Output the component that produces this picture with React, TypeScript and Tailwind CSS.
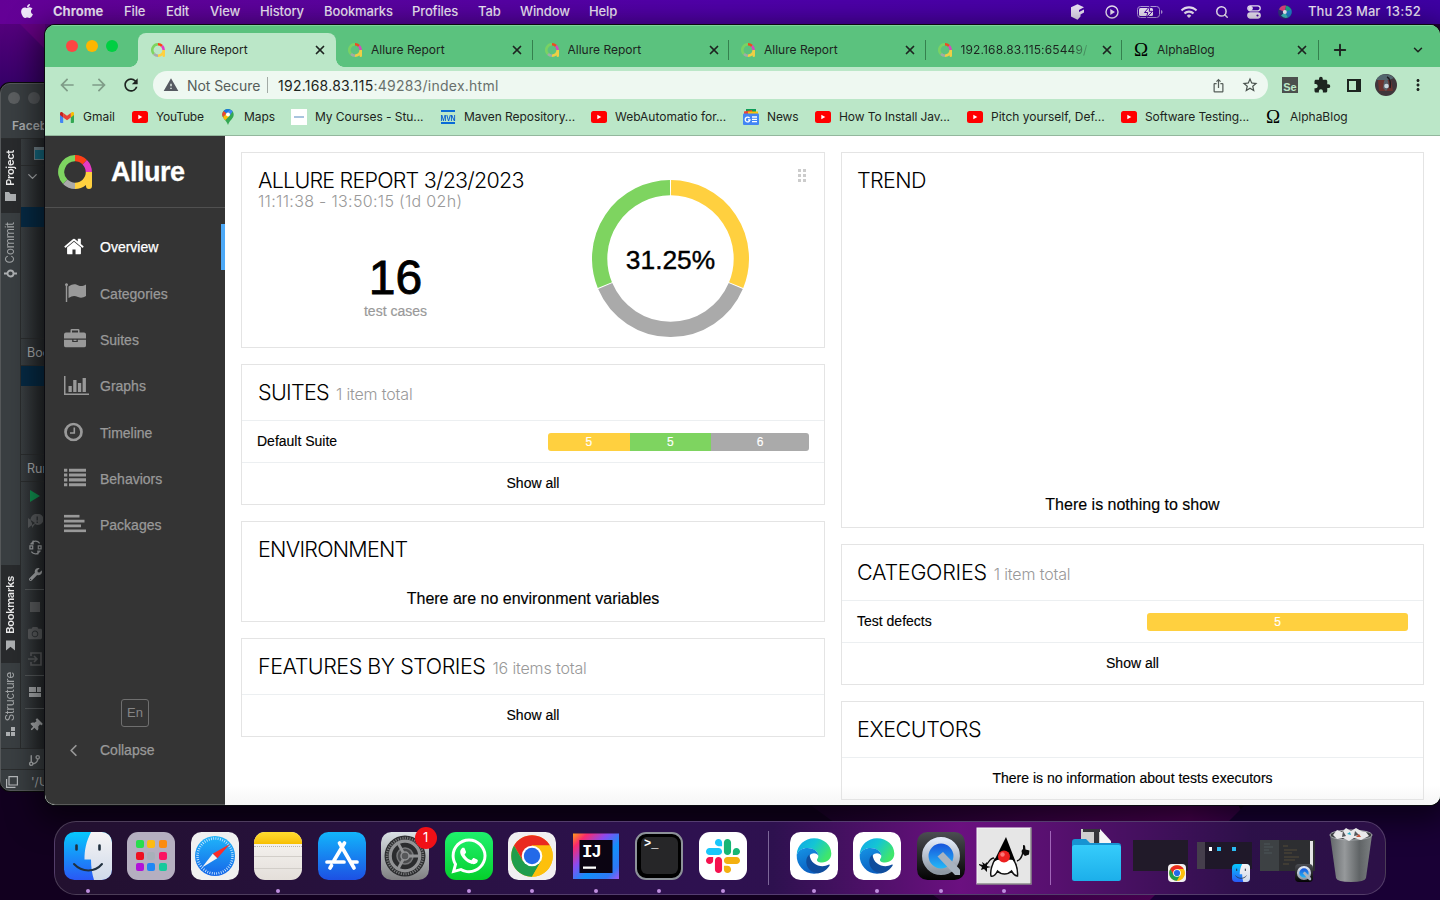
import type { ReactNode } from "react";
import { FaApple, FaWhatsapp, FaWrench, FaCamera, FaThumbtack } from "react-icons/fa";
import {
  MdArrowBack,
  MdArrowForward,
  MdRefresh,
  MdWarning,
  MdIosShare,
  MdStarBorder,
  MdExtension,
  MdMoreVert,
  MdWifi,
} from "react-icons/md";
import { ChevronDown, ChevronLeft, Search, GitBranch, X, Plus } from "lucide-react";

function Arc({ cx, cy, r, w, from, to, color }: { cx: number; cy: number; r: number; w: number; from: number; to: number; color: string }) {
  const p = (a: number) => {
    const t = ((a - 90) * Math.PI) / 180;
    return `${(cx + r * Math.cos(t)).toFixed(3)} ${(cy + r * Math.sin(t)).toFixed(3)}`;
  };
  return <path d={`M${p(from)}A${r} ${r} 0 ${to - from > 180 ? 1 : 0} 1 ${p(to)}`} stroke={color} strokeWidth={w} fill="none" />;
}

function AllureMark({ className }: { className: string }) {
  return (
    <svg viewBox="0 0 34 34" className={className}>
      <Arc cx={17} cy={17} r={13.8} w={6.2} from={225} to={360} color="#7ed460" />
      <Arc cx={17} cy={17} r={13.8} w={6.2} from={0} to={45} color="#fd3f17" />
      <Arc cx={17} cy={17} r={13.8} w={6.2} from={45} to={90} color="#e63bc3" />
      <Arc cx={17} cy={17} r={13.8} w={6.2} from={180} to={225} color="#aaaaaa" />
      <path d="M17 34V27.800C23 27.800 27.800 23 27.800 17H34V31A3 3 0 0 1 28 31V30C25 32.800 21 34 17 34Z" fill="#ffd03f" />
    </svg>
  );
}

/* ---------- menu bar ---------- */

function MenuBar() {
  const items: [string, string][] = [
    ["File", "w-[42px]"],
    ["Edit", "w-[44px]"],
    ["View", "w-[50px]"],
    ["History", "w-[64px]"],
    ["Bookmarks", "w-[88px]"],
    ["Profiles", "w-[66px]"],
    ["Tab", "w-[42px]"],
    ["Window", "w-[69px]"],
    ["Help", "w-[40px]"],
  ];
  return (
    <header className="flex h-6 shrink-0 items-center bg-gradient-to-r from-[#640096] via-[#5000aa] to-[#3e00a4] pl-[19px] pr-[18px] font-['Inter'] text-[13px] font-medium tracking-[-0.12px] text-[#f1e8fb]">
      <FaApple className="mr-[18px] size-[16px] -translate-y-px" />
      <span className="w-[71px] font-bold tracking-[0px]">Chrome</span>
      {items.map(([t, w]) => (
        <span key={t} className={`${w} whitespace-nowrap`}>
          {t}
        </span>
      ))}
      <span className="grow" />
      <svg viewBox="0 0 16 16" className="mr-[19px] size-[16px] text-[#eee6fa]" fill="currentColor">
        <path d="M7.500 .3 14 3.300 9 6v2l5-2.500v3L10.500 10.500v2L7.500 15.700 1 12.500V3.300z" />
      </svg>
      <svg viewBox="0 0 14 14" className="mr-[18px] size-[14px]" fill="none" stroke="currentColor" strokeWidth="1.400">
        <circle cx="7" cy="7" r="6" />
        <path d="M5.300 4 10 7 5.300 10z" fill="currentColor" stroke="none" />
      </svg>
      <svg viewBox="0 0 26 12" className="mr-[17px] h-[12px] w-[26px]" fill="none">
        <rect x=".5" y=".5" width="22" height="11" rx="3" stroke="#b49be0" />
        <rect x="2" y="2" width="14" height="8" rx="1.500" fill="#f1e8fb" />
        <path d="M24 4v4c2-.8 2-3.200 0-4" fill="#b49be0" />
        <path d="M13 .2 7.500 6.500h3.200L9.500 11.800 15.500 5.300h-3.300z" fill="#f1e8fb" stroke="#4a00a6" strokeWidth="1" />
      </svg>
      <MdWifi className="mr-[17px] size-[18px]" />
      <Search className="mr-[18px] size-[14px]" strokeWidth={2.6} />
      <svg viewBox="0 0 14 14" className="mr-[17px] size-[14px]" fill="none" stroke="currentColor" strokeWidth="1.300">
        <rect x=".8" y=".8" width="12.400" height="5" rx="2.500" />
        <circle cx="3.500" cy="3.300" r="1.700" fill="currentColor" />
        <rect x=".8" y="8" width="12.400" height="5" rx="2.500" fill="currentColor" />
        <circle cx="10.500" cy="10.500" r="1.100" fill="#4a00a6" stroke="none" />
      </svg>
      <svg viewBox="0 0 14 14" className="mr-[16px] size-[14px]">
        <circle cx="7" cy="7" r="7" fill="#31307e" />
        <path d="M1 4.500A6.500 6.500 0 0 1 8 .6L7 7z" fill="#e0407f" />
        <path d="M7 7 12.800 3.500A6.500 6.500 0 0 1 10 12.700z" fill="#1f7fd1" />
        <path d="M7 7 8 .8a6.500 6.500 0 0 1 5 4z" fill="#19a78c" />
        <path d="M3 10.500 7 7l3 5.500a6.500 6.500 0 0 1-7-2z" fill="#3fc3c3" />
        <circle cx="6.800" cy="7" r="2" fill="#f3f4ff" />
      </svg>
      <span className="w-[78px] whitespace-nowrap tracking-[0.1px]">Thu 23 Mar</span>
      <span className="w-[36px] whitespace-nowrap text-[13px] tracking-[0.3px]">13:52</span>
    </header>
  );
}

/* ---------- editor window behind the browser ---------- */

function StripeLabel({ children, active, h, icon }: { children: string; active?: boolean; h: string; icon: ReactNode }) {
  return (
    <div className={`${h} flex w-5 flex-col items-center justify-end pb-[12px] pr-[2px] ${active ? "bg-[#292b2d] font-semibold text-[#eeeeee]" : "text-[#a3a6a8]"}`}>
      <span
        className={`rotate-180 whitespace-nowrap leading-5 [writing-mode:vertical-rl] ${active ? "text-[11px] tracking-[-0.250px]" : "text-[11.500px] tracking-[-0.100px]"}`}
      >
        {children}
      </span>
      <span className="mt-[6px] text-[#aeb1b3]">{icon}</span>
    </div>
  );
}

function EditorWindow() {
  return (
    <section className="absolute left-0 top-[83px] flex h-[708px] w-[200px] flex-col overflow-hidden rounded-[10px] border border-[#55585a] bg-[#3a3f42] font-['Inter'] text-[#a9acae] shadow-[0_0_0_1px_#0a0a0a]">
      <div className="flex h-[27px] shrink-0 items-center gap-2 pl-[7px]">
        <i className="size-3 rounded-full bg-[#5c5f61]" />
        <i className="size-3 rounded-full bg-[#54575a]" />
      </div>
      <div className="h-[28px] shrink-0 border-b border-[#2b2d2e] pl-[11px] text-[12px] font-semibold leading-[29px]">Facebook</div>
      <div className="flex min-h-0 grow">
        <div className="flex w-5 shrink-0 flex-col border-r border-[#2b2d2e]">
          <StripeLabel
            active
            h="h-[74px]"
            icon={
              <svg viewBox="0 0 11 9" className="h-[9px] w-[11px]" fill="currentColor">
                <path d="M0 0h4l1.500 2H11v7H0z" />
              </svg>
            }
          >
            Project
          </StripeLabel>
          <StripeLabel
            h="h-[77px]"
            icon={
              <svg viewBox="0 0 13 9" className="h-[9px] w-[13px]" fill="none" stroke="currentColor" strokeWidth="1.800">
                <circle cx="6.500" cy="4.500" r="3" />
                <path d="M0 4.500h3.500M9.500 4.500H13" />
              </svg>
            }
          >
            Commit
          </StripeLabel>
          <div className="grow" />
          <StripeLabel
            active
            h="h-[98px]"
            icon={
              <svg viewBox="0 0 10 11" className="h-[11px] w-[9px]" fill="currentColor">
                <path d="M0 0h10v11L5 7l-5 4z" />
              </svg>
            }
          >
            Bookmarks
          </StripeLabel>
          <StripeLabel
            h="h-[85px]"
            icon={
              <svg viewBox="0 0 9 9" className="size-[9px]" fill="currentColor">
                <path d="M5 0h4v4H5zM0 5h4v4H0zM5 5h4v4H5z" />
              </svg>
            }
          >
            Structure
          </StripeLabel>
        </div>
        <div className="flex w-[100px] flex-col bg-gradient-to-r from-[#3a3f42] from-0% to-[#25282a] to-[25%]">
          <div className="h-[27px] border-b border-[#2b2d2e] pl-[13px] pt-[8px]">
            <div className="h-[13px] w-5 border border-t-[3px] border-[#6f8088] bg-[#15697f]" />
          </div>
          <div className="flex h-[41px] items-start pl-[4px] pt-[3px]">
            <ChevronDown className="size-[15px]" />
          </div>
          <div className="h-5 bg-[#062a44]" />
          <div className="h-[111px]" />
          <div className="h-[28px] border-y border-[#2b2d2e] pl-[6px] text-[12.500px] leading-[28px]">Bookmarks</div>
          <div className="h-5 bg-[#062a44]" />
          <div className="h-[68px]" />
          <div className="h-[28px] border-y border-[#2b2d2e] pl-[6px] text-[12.500px] leading-[28px]">Run:</div>
          <div className="flex h-[267px] w-[24px] flex-col items-center pl-1">
            <svg viewBox="0 0 10 12" className="mt-[8px] h-[12px] w-[10px] shrink-0">
              <path d="M0 0v12l10-6z" fill="#10904f" />
            </svg>
            <svg viewBox="0 0 15 14" className="mt-[12px] h-[14px] w-[15px] shrink-0" fill="#5a5d5f">
              <path d="M0 4v10l7-5zM9 0a5.500 5.500 0 1 1-2 10l-3 4V9A5.500 5.500 0 0 1 9 0z" />
              <path d="M8.500 2.500h1.500v4H8.500zM8.500 7.500h1.500V9H8.500z" fill="#33373a" />
            </svg>
            <svg viewBox="0 0 14 16" className="mt-[12px] h-[15px] w-[13px] shrink-0" fill="none" stroke="#a2a5a7" strokeWidth="1.300">
              <path d="M1 6.300h3v3.200H1zM10 6.300h3v3.200h-3zM2.500 4C4 .5 9 0 11.500 3.500M4.500 .5v3.700h-3M11.500 12C10 15.500 5 16 2.500 12.500M9.500 15.500v-3.700h3" />
            </svg>
            <FaWrench className="mt-[13px] size-[13px] shrink-0" />
            <div className="mt-[8px] h-px w-full shrink-0 bg-[#54585a]" />
            <div className="mt-[12px] size-[10px] shrink-0 bg-[#5a5c5e]" />
            <FaCamera className="mt-[14px] size-[14px] shrink-0 text-[#5a5c5e]" />
            <svg viewBox="0 0 14 14" className="mt-[12px] size-[14px] shrink-0" fill="none" stroke="#5a5c5e" strokeWidth="1.600">
              <path d="M3 4V1h10v12H3v-3M0 7h8M6 4l3 3-3 3" />
            </svg>
            <div className="mt-[9px] h-px w-full shrink-0 bg-[#54585a]" />
            <svg viewBox="0 0 12 10" className="mt-[11px] h-[10px] w-[12px] shrink-0" fill="#a6a9ab">
              <path d="M0 0h7v5H0zM8 0h4v5H8zM0 6h12v4H0z" />
            </svg>
            <div className="mt-[11px] h-px w-full shrink-0 bg-[#54585a]" />
            <FaThumbtack className="mt-[10px] size-[13px] shrink-0 rotate-45" />
          </div>
        </div>
      </div>
      <div className="flex h-[21px] shrink-0 items-center border-t border-[#2b2d2e] pl-[27px] pt-[2px]">
        <GitBranch className="size-[13px]" strokeWidth={2.6} />
      </div>
      <div className="flex h-[21px] shrink-0 items-center gap-[13px] border-t border-[#2b2d2e] pl-[5px] pt-[3px] text-[12px]">
        <svg viewBox="0 0 12 12" className="size-[12px]" fill="none" stroke="#b5b8ba" strokeWidth="1.200">
          <path d="M3 .6h8.400V9H3zM.6 3v8.400H9.500" />
        </svg>
        '/Users
      </div>
    </section>
  );
}

/* ---------- browser chrome ---------- */

function Tab({ title, active, alpha, divider, fade }: { title: string; active?: boolean; alpha?: boolean; divider?: boolean; fade?: boolean }) {
  return (
    <div
      className={`relative flex h-[34px] shrink-0 items-center pl-[13px] ${active ? "mr-[-1px] w-[198px] rounded-t-[8px] bg-[#bbe7c8]" : "w-[196.500px]"}`}
    >
      {active && (
        <>
          <i className="absolute -left-2 bottom-0 size-2 bg-[radial-gradient(circle_at_0_0,transparent_7.500px,#bbe7c8_8px)]" />
          <i className="absolute -right-2 bottom-0 size-2 bg-[radial-gradient(circle_at_100%_0,transparent_7.500px,#bbe7c8_8px)]" />
        </>
      )}
      {alpha ? (
        <span className="w-[16px] font-['Liberation_Serif'] text-[19px] leading-4 text-black">Ω</span>
      ) : (
        <AllureMark className={`size-[14px] ${active ? "" : "opacity-90"}`} />
      )}
      <span
        className={`overflow-hidden whitespace-nowrap text-[12px] text-[#1d2420] ${alpha ? "ml-[7px] w-[130px]" : "ml-[9px] w-[132px]"} ${
          fade ? "bg-gradient-to-r from-[#1d2420] from-[82%] to-transparent to-[100%] bg-clip-text tracking-[0.130px] text-transparent" : ""
        }`}
      >
        {title}
      </span>
      <X className={`size-[14px] shrink-0 text-[#1d2420] ${alpha ? "ml-[8px]" : "ml-[7px]"}`} strokeWidth={3} />
      <span className="grow" />
      {divider && <i className="-mr-px h-5 w-px bg-[#35804e]" />}
    </div>
  );
}

const Youtube = () => (
  <svg viewBox="0 0 16 12" className="h-[12px] w-[16px]">
    <rect width="16" height="12" rx="2.500" fill="#ff0000" />
    <path d="M6.300 3.700v4.600L10.300 6z" fill="#fff" />
  </svg>
);

const Gmail = () => (
  <svg viewBox="0 0 14 11" className="ml-px h-[11px] w-[14px]">
    <path d="M0 2v8q0 1 1 1h2.200V4z" fill="#4285f4" />
    <path d="M14 2v8q0 1-1 1h-2.200V4z" fill="#34a853" />
    <path d="M10.800 1v4.500L14 3V1.500C14 0 12.500-.4 11.500.4z" fill="#fbbc04" />
    <path d="M3.200 5.500V1L7 3.800 10.800 1v4.500L7 8.300z" fill="#ea4335" />
    <path d="M0 1.500V3l3.200 2.500V1L2.500.4C1.500-.4 0 0 0 1.500z" fill="#c5221f" />
  </svg>
);

const MapsPin = () => (
  <svg viewBox="0 0 12 16" className="ml-[2px] h-[16px] w-[12px]">
    <path d="M6 0C2.700 0 .3 2.600.3 5.500c0 4 4 5.500 5.700 10.500 1.700-5 5.700-6.500 5.700-10.500C11.700 2.600 9.300 0 6 0z" fill="#34a853" />
    <path d="M6 0C4.200 0 2.700.7 1.600 1.900L4.500 4.400 8 .4A6 6 0 0 0 6 0z" fill="#1a73e8" />
    <path d="M1.600 1.900A5.500 5.500 0 0 0 1 8.200L4.500 4.400z" fill="#ea4335" />
    <path d="M1 8.200c.6 1.200 1.400 2 2.200 3L7.600 6.800 4.500 4.400z" fill="#fbbc04" />
    <path d="M8 .4 4.500 4.400A2 2 0 0 1 7.600 6.800l3.200-4.600A5.600 5.600 0 0 0 8 .4z" fill="#4285f4" />
    <circle cx="6" cy="5.500" r="2" fill="#fff" />
  </svg>
);

const Courses = () => (
  <span className="flex size-4 items-center justify-center bg-white">
    <i className="h-[2px] w-[10px] bg-[#a9c4de]" />
  </span>
);

const Mvn = () => (
  <span className="ml-px flex h-[14px] w-[14px] items-center justify-center border-y-2 border-[#0a6bd6] font-['Liberation_Sans'] text-[7px] font-bold leading-none tracking-[-0.200px] text-[#0a5fd0]">
    <span className="scale-y-125">MVN</span>
  </span>
);

const News = () => (
  <svg viewBox="0 0 16 16" className="size-[16px]">
    <path d="M3 0h10v5H3z" fill="#0c9d58" />
    <path d="M1 2.500 9 1l1 5H1z" fill="#ea4335" />
    <path d="M5 2.500h10V6H5z" fill="#ffc107" />
    <rect y="4.500" width="16" height="11.500" rx="1" fill="#4285f4" />
    <path d="M6.600 9.200A2.400 2.400 0 1 0 7 10.800H5M9 8h5M9 10.300h5M9 12.600h5" stroke="#fff" strokeWidth="1.300" fill="none" />
  </svg>
);

const Omega = () => <span className="w-4 font-['Liberation_Serif'] text-[19px] leading-4 text-black">Ω</span>;

function Browser() {
  const bookmarks: [string, string, ReactNode, string][] = [
    ["Gmail", "w-[73px]", <Gmail />, "tracking-[0px]"],
    ["YouTube", "w-[88px]", <Youtube />, "tracking-[-0.2px]"],
    ["Maps", "w-[71px]", <MapsPin />, "tracking-[-0.1px]"],
    ["My Courses - Stu...", "w-[149px]", <Courses />, "tracking-[-0.06px]"],
    ["Maven Repository...", "w-[151px]", <Mvn />, "tracking-[-0.05px]"],
    ["WebAutomatio for...", "w-[152px]", <Youtube />, "tracking-[-0.02px]"],
    ["News", "w-[72px]", <News />, "tracking-[-0.1px]"],
    ["How To Install Jav...", "w-[152px]", <Youtube />, "tracking-[-0.1px]"],
    ["Pitch yourself, Def...", "w-[154px]", <Youtube />, "tracking-[0px]"],
    ["Software Testing...", "w-[145px]", <Youtube />, "tracking-[-0.1px]"],
    ["AlphaBlog", "w-[90px]", <Omega />, "tracking-[0px]"],
  ];
  return (
    <section className="absolute left-[45px] top-[25px] flex h-[780px] w-[1395px] flex-col overflow-hidden rounded-[10px] bg-[#bbe7c8] font-['Inter'] shadow-[0_0_0_1px_#0b0b10,0_8px_30px_8px_rgba(0,0,0,0.55)]">
      <div className="flex h-[42px] shrink-0 items-end border-t border-[#7fd39b] bg-[#5bc27e]">
        <div className="flex h-[42px] w-[93px] shrink-0 items-center gap-2 pl-[21px]">
          <i className="size-3 rounded-full bg-[#fe4642]" />
          <i className="size-3 rounded-full bg-[#fdb600]" />
          <i className="size-3 rounded-full bg-[#00cf42]" />
        </div>
        <Tab title="Allure Report" active />
        <Tab title="Allure Report" divider />
        <Tab title="Allure Report" divider />
        <Tab title="Allure Report" divider />
        <Tab title="192.168.83.115:65449/" divider fade />
        <Tab title="AlphaBlog" alpha divider />
        <div className="flex h-[34px] grow items-center pl-[13px] text-[#1d2420]">
          <Plus className="size-[18px]" strokeWidth={2.5} />
          <span className="grow" />
          <ChevronDown className="mr-[15px] size-[14px]" strokeWidth={2.6} />
        </div>
      </div>
      <div className="flex h-[36px] shrink-0 items-center pl-[12px] pr-[12px]">
        <MdArrowBack className="size-[20px] text-[#7f9c88]" />
        <MdArrowForward className="ml-[12px] size-[20px] text-[#7f9c88]" />
        <MdRefresh className="ml-[12px] size-[20px] text-[#1d2420]" />
        <div className="ml-[12px] flex h-7 w-[1115px] items-center rounded-full bg-[#eef8f1] pl-[10px] pr-[9px] text-[14px]">
          <MdWarning className="size-[16px] text-[#565a61]" />
          <span className="ml-[8px] w-[73px] whitespace-nowrap tracking-[-0.08px] text-[#565e5a]">Not Secure</span>
          <i className="ml-[7px] h-4 w-px bg-[#a2aaa5]" />
          <span className="ml-[10px] whitespace-nowrap tracking-[0.250px] text-[#1d2420]">
            192.168.83.115<span className="text-[#68706c]">:49283/index.html</span>
          </span>
          <span className="grow" />
          <MdIosShare className="size-[15px] text-[#565e5a]" />
          <MdStarBorder className="ml-[15px] size-[18px] text-[#4a524e]" />
        </div>
        <div className="ml-[14px] flex size-4 items-end justify-center bg-[#4b4f4d] font-['Liberation_Sans'] text-[11px] font-bold leading-[12px] text-[#bbe7c8]">Se</div>
        <MdExtension className="ml-[15px] size-[18px] text-[#1d2420]" />
        <i className="ml-[16px] h-[13px] w-[14px] border-2 border-r-[5px] border-[#1d2420]" />
        <svg viewBox="0 0 22 22" className="ml-[14px] size-[22px]">
          <circle cx="11" cy="11" r="11" fill="#40363b" />
          <path d="M3 6h13l2 11H4z" fill="#6b3430" />
          <path d="M1 6a11 11 0 0 1 18-2L14 6z" fill="#53666e" />
          <path d="M9 7l2-3 2 3 1 6-3 4-3-3z" fill="#59626b" />
          <circle cx="11.500" cy="12" r="2.300" fill="#c9d6de" />
          <path d="M12 3c3 1 4 6 3 11" stroke="#1d1a20" strokeWidth="1.500" fill="none" />
        </svg>
        <MdMoreVert className="ml-[12px] size-[18px] text-[#1d2420]" />
      </div>
      <div className="flex h-[33px] shrink-0 items-center border-b border-[#93b79d] pb-[4px] pl-[14px]">
        {bookmarks.map(([t, w, icon, tr], i) => (
          <div key={i} className={`flex ${w} shrink-0 items-center whitespace-nowrap text-[12px] text-[#1d2420]`}>
            <span className="flex h-4 w-6 items-center">{icon}</span>
            <span className={tr}>{t}</span>
          </div>
        ))}
      </div>
      <div className="flex min-h-0 grow bg-white">
        <Sidebar />
        <Report />
      </div>
    </section>
  );
}

/* ---------- Allure page ---------- */

function NavItem({ label, active, children }: { label: string; active?: boolean; children: ReactNode }) {
  return (
    <li className={`flex h-[46.330px] items-center pl-[19px] ${active ? "border-r-4 border-[#4da9f7] text-white" : "text-[#999999]"}`}>
      <span className="flex w-9 items-center">{children}</span>
      <span className="mt-[1.500px] text-[14px] [-webkit-text-stroke:0.25px_currentColor]">{label}</span>
    </li>
  );
}

function Sidebar() {
  return (
    <nav className="flex w-[180px] shrink-0 flex-col rounded-bl-[10px] border-b border-[#5a5a5a] bg-[#343434] font-['Liberation_Sans']">
      <div className="flex h-[72px] items-center border-b border-[#505050] pl-[13px]">
        <AllureMark className="size-[34px]" />
        <span className="ml-[19px] pt-[2px] text-[27px] font-bold tracking-[-0.500px] text-white [-webkit-text-stroke:0.3px_currentColor]">Allure</span>
      </div>
      <ul className="mt-4">
        <NavItem label="Overview" active>
          <svg viewBox="64 200 1664 1400" className="h-[17px] w-[20px] -translate-y-px" fill="currentColor">
            <path d="M1472 992v480q0 26-19 45t-45 19h-384v-384H768v384H384q-26 0-45-19t-19-45V992q0-1 .5-3t.5-3l575-474 575 474q1 2 1 6zm223-69l-62 74q-8 9-21 11h-3q-13 0-21-7L896 424l-692 577q-12 8-24 7-13-2-21-11l-62-74q-8-10-7-23.500T108 878l719-599q32-26 69-26t69 26l244 204V288q0-14 9-23t23-9h192q14 0 23 9t9 23v408l219 182q10 8 11 21.500t-7 23.500z" />
          </svg>
        </NavItem>
        <NavItem label="Categories">
          <svg viewBox="0 0 22 20" className="ml-px h-[20px] w-[22px]" fill="currentColor">
            <path d="M0 1.800A1.500 1.500 0 1 1 2.200 3v16H.8V3A1.500 1.500 0 0 1 0 1.800zM3.500 3.500C8 .5 10 .8 13.500 2.500c2.500 1.200 4.500.5 7.500-1V13c-3 1.700-5 2.300-8 1-3.500-1.700-5.500-1.500-9.500 1z" />
          </svg>
        </NavItem>
        <NavItem label="Suites">
          <svg viewBox="0 0 22 19" className="h-[19px] w-[22px] -translate-y-[1.500px]" fill="currentColor">
            <path d="M6.500 4V1.800Q6.500.5 7.800.5h6.400q1.300 0 1.300 1.300V4h4.500q2 0 2 2v4H0V6q0-2 2-2zM8 4h6V2H8zM0 11.200h8.200v2.300h5.600v-2.300H22V17q0 2-2 2H2q-2 0-2-2zM9.500 11.200h3v1.200h-3z" />
          </svg>
        </NavItem>
        <NavItem label="Graphs">
          <svg viewBox="0 0 25 19" className="h-[19px] w-[25px] shrink-0 -translate-y-px" fill="currentColor">
            <path d="M0 0h1.500v17.500H25V19H0zM4.500 10h3.300v6H4.500zM9.200 4h3.300v12H9.200zM13.900 7h3.300v9h-3.300zM18.600 2h3.300v14h-3.300z" />
          </svg>
        </NavItem>
        <NavItem label="Timeline">
          <svg viewBox="0 0 19 19" className="size-[19px] -translate-y-[0.500px]" fill="none" stroke="currentColor">
            <circle cx="9.500" cy="9.500" r="8" strokeWidth="2.700" />
            <path d="M10.300 5v5.500H6" strokeWidth="1.600" />
          </svg>
        </NavItem>
        <NavItem label="Behaviors">
          <svg viewBox="0 0 22 18" className="h-[18px] w-[22px] -translate-y-[1.500px]" fill="currentColor">
            <path d="M0 0h3.300v3.200H0zM5 0h17v3.200H5zM0 4.900h3.300v3.200H0zM5 4.900h17v3.200H5zM0 9.800h3.300V13H0zM5 9.800h17V13H5zM0 14.700h3.300v3.200H0zM5 14.700h17v3.200H5z" />
          </svg>
        </NavItem>
        <NavItem label="Packages">
          <svg viewBox="0 0 22 18" className="h-[18px] w-[22px] -translate-y-[1.500px]" fill="currentColor">
            <path d="M0 .3h15.500v2.700H0zM0 5.200h20.500v2.700H0zM0 10.100h17v2.700H0zM0 15h22v2.700H0z" />
          </svg>
        </NavItem>
      </ul>
      <div className="grow" />
      <div className="flex h-7 w-7 shrink-0 items-center justify-center self-center rounded-[3px] border border-[#6f6f6f] text-[13px] text-[#858585]">En</div>
      <div className="mb-[31px] flex h-[46px] items-center pl-[19px] text-[14px] text-[#999999]">
        <span className="w-9">
          <ChevronLeft className="size-[19px]" strokeWidth={2.2} />
        </span>
        <span className="[-webkit-text-stroke:0.25px_currentColor]">Collapse</span>
      </div>
    </nav>
  );
}

function Title({ text, sub, track = "tracking-[-0.700px]" }: { text: string; sub?: string; track?: string }) {
  return (
    <h2 className={`-mt-px whitespace-nowrap font-['Inter'] text-[21.500px] font-light leading-[26px] text-black ${track}`}>
      {text}
      {sub && <span className="ml-[7px] text-[16px] tracking-[-0.150px] text-[#999999]">{sub}</span>}
    </h2>
  );
}

function ShowAll() {
  return <div className="flex h-[42px] items-center justify-center border-t border-[#eceff1] text-[14px]">Show all</div>;
}

function BarRow({ name, segs }: { name: string; segs: { n: number; cls: string }[] }) {
  return (
    <div className="flex h-[42px] items-center justify-between border-t border-[#eceff1] px-[15px] text-[14px]">
      <span>{name}</span>
      <div className="flex h-[18px] w-[261px] overflow-hidden rounded-[3px] text-[12px] leading-[18px] text-white">
        {segs.map((s, i) => (
          <span key={i} className={`${s.cls} basis-0 text-center`} style={{ flexGrow: s.n }}>
            {s.n}
          </span>
        ))}
      </div>
    </div>
  );
}

const card = "flex shrink-0 flex-col border border-[#e4e4e4]";

function Report() {
  return (
    <main className="flex grow gap-4 overflow-hidden bg-gradient-to-b from-white from-[97%] to-[#f6f6f6] p-4 font-['Liberation_Sans'] text-black">
      <div className="flex w-[584px] flex-col gap-4">
        <div className={`${card} h-[196px]`}>
          <div className="flex h-full">
            <div className="flex w-[307px] flex-col pt-[15px]">
              <div className="pl-4">
                <Title text="ALLURE REPORT 3/23/2023" track="tracking-[-0.780px]" />
                <div className="-mt-[3px] whitespace-nowrap font-['Inter'] text-[16px] font-light leading-[22px] tracking-[0.320px] text-[#999999]">11:11:38 - 13:50:15 (1d 02h)</div>
              </div>
              <div className="mt-[37px] text-center text-[48px] leading-[58px] [-webkit-text-stroke:0.9px_currentColor]">16</div>
              <div className="-mt-[4px] text-center text-[14px] leading-4 text-[#999999] [-webkit-text-stroke:0.2px_currentColor]">test cases</div>
            </div>
            <div className="flex w-[242.500px] items-start justify-center pt-[26.500px]">
              <svg viewBox="0 0 158 158" className="size-[157px]">
                <Arc cx={79} cy={79} r={71.3} w={15.4} from={0.4} to={112.1} color="#ffd03f" />
                <Arc cx={79} cy={79} r={71.3} w={15.4} from={112.9} to={247.1} color="#aaaaaa" />
                <Arc cx={79} cy={79} r={71.3} w={15.4} from={247.9} to={359.6} color="#7ed460" />
                <text x="79" y="90" textAnchor="middle" fontSize="26.500" letterSpacing="0" fill="#000" stroke="#000" strokeWidth="0.400">
                  31.25%
                </text>
              </svg>
            </div>
            <svg viewBox="0 0 8 14" className="ml-[6.500px] mt-[16px] h-[14px] w-[8px]" fill="#cccccc">
              <path d="M0 0h3v3H0zM5 0h3v3H5zM0 5h3v3H0zM5 5h3v3H5zM0 10h3v3H0zM5 10h3v3H5z" />
            </svg>
          </div>
        </div>
        <div className={`${card} h-[141px] [-webkit-text-stroke:0.15px_currentColor]`}>
          <div className="h-[55px] pl-4 pt-[15px] [-webkit-text-stroke:0]">
            <Title text="SUITES" sub="1 item total" />
          </div>
          <BarRow
            name="Default Suite"
            segs={[
              { n: 5, cls: "bg-[#ffd03f]" },
              { n: 5, cls: "bg-[#7ed460]" },
              { n: 6, cls: "bg-[#aaaaaa]" },
            ]}
          />
          <ShowAll />
        </div>
        <div className={`${card} h-[101px] pt-[15px]`}>
          <div className="pl-4">
            <Title text="ENVIRONMENT" track="tracking-[-0.740px]" />
          </div>
          <div className="mt-[27px] text-center text-[16px] leading-5 [-webkit-text-stroke:0.15px_currentColor]">There are no environment variables</div>
        </div>
        <div className={`${card} h-[99px] [-webkit-text-stroke:0.15px_currentColor]`}>
          <div className="h-[55px] pl-4 pt-[15px] [-webkit-text-stroke:0]">
            <Title text="FEATURES BY STORIES" sub="16 items total" track="tracking-[-0.480px]" />
          </div>
          <ShowAll />
        </div>
      </div>
      <div className="flex w-[583px] flex-col gap-4">
        <div className={`${card} h-[376px] justify-between pb-[12px] pt-[15px]`}>
          <div className="pl-[15px]">
            <Title text="TREND" track="tracking-[-0.600px]" />
          </div>
          <div className="text-center text-[16px] leading-5 [-webkit-text-stroke:0.15px_currentColor]">There is nothing to show</div>
        </div>
        <div className={`${card} h-[141px] [-webkit-text-stroke:0.15px_currentColor]`}>
          <div className="h-[55px] pl-[15px] pt-[15px] [-webkit-text-stroke:0]">
            <Title text="CATEGORIES" sub="1 item total" track="tracking-[-0.260px]" />
          </div>
          <BarRow name="Test defects" segs={[{ n: 5, cls: "bg-[#ffd03f]" }]} />
          <ShowAll />
        </div>
        <div className={`${card} h-[99px] [-webkit-text-stroke:0.15px_currentColor]`}>
          <div className="h-[55px] pl-[15px] pt-[15px] [-webkit-text-stroke:0]">
            <Title text="EXECUTORS" track="tracking-[-0.420px]" />
          </div>
          <div className="flex h-[42px] items-center justify-center border-t border-[#eceff1] text-[14px]">There is no information about tests executors</div>
        </div>
      </div>
    </main>
  );
}

/* ---------- dock ---------- */

function Finder({ className }: { className: string }) {
  return (
    <svg viewBox="0 0 48 48" className={className}>
      <defs>
        <linearGradient id="fl" x2="0" y2="1"><stop stopColor="#06c8fd" /><stop offset="1" stopColor="#2a58f5" /></linearGradient>
        <linearGradient id="fr" x2="0" y2="1"><stop stopColor="#f6f4f5" /><stop offset="1" stopColor="#cfdaea" /></linearGradient>
        <clipPath id="fc"><rect width="48" height="48" rx="10.500" /></clipPath>
      </defs>
      <g clipPath="url(#fc)">
        <rect width="48" height="48" fill="url(#fl)" />
        <path d="M27 0C22 10 20.500 18 20.500 27.500H27C27 35 28 42 30 48H48V0z" fill="url(#fr)" />
      </g>
      <path d="M12.500 13.500v4M35.500 13.500v4" stroke="#20303f" strokeWidth="2.600" strokeLinecap="round" />
      <path d="M10 32C18 40.500 31 40.500 38 32" stroke="#20303f" strokeWidth="2" fill="none" strokeLinecap="round" />
    </svg>
  );
}

function Launchpad() {
  const c = ["#29dd4c", "#fdbb12", "#fc8b10", "#ee1020", "#a8b0ba", "#fb1462", "#b012d8", "#1f87f5", "#18c99c"];
  return (
    <div className="grid size-12 grid-cols-[8px_8px_8px] content-center justify-center gap-[3.500px] rounded-[11px] bg-[#b5afc0]">
      {c.map((x) => (
        <i key={x} className="size-[8px] rounded-[2px]" style={{ backgroundColor: x }} />
      ))}
    </div>
  );
}

function Safari() {
  return (
    <svg viewBox="0 0 48 48" className="size-12">
      <defs>
        <linearGradient id="sf" x2="0" y2="1"><stop stopColor="#1fb5fa" /><stop offset="1" stopColor="#1666e8" /></linearGradient>
      </defs>
      <rect width="48" height="48" rx="10.500" fill="#f0f0f0" />
      <circle cx="24" cy="24" r="20" fill="url(#sf)" />
      <circle cx="24" cy="24" r="17.500" fill="none" stroke="#d7ecff" strokeWidth="2.500" strokeDasharray=".8 1.490" />
      <path d="M39 12 26.300 26.300 21.700 21.700z" fill="#fb2d2a" />
      <path d="M11 35.500 21.700 21.700 26.300 26.300z" fill="#f4f4f4" />
    </svg>
  );
}

function Notes() {
  return (
    <div className="flex size-12 flex-col overflow-hidden rounded-[11px] bg-gradient-to-b from-[#f8f6f4] to-[#e4dfda]">
      <i className="h-[12px] bg-gradient-to-b from-[#ffdc2e] to-[#f7bf00]" />
      <i className="mt-[2px] border-t border-dotted border-[#b9b5b0]" />
      <i className="mt-[9px] h-px bg-[#d2cec9]" />
      <i className="mt-[11px] h-px bg-[#d2cec9]" />
    </div>
  );
}

function AppStore() {
  return (
    <svg viewBox="0 0 48 48" className="size-12">
      <defs>
        <linearGradient id="as" x2="0" y2="1"><stop stopColor="#12b5fb" /><stop offset="1" stopColor="#1d50e4" /></linearGradient>
      </defs>
      <rect width="48" height="48" rx="10.500" fill="url(#as)" />
      <g stroke="#fff" strokeWidth="3.700" strokeLinecap="round" fill="none">
        <path d="M26.500 11 16 28.500M21.500 11 36 36M9 30h17M33.500 30H39M13.500 33.500 12 36" />
      </g>
    </svg>
  );
}

function Settings() {
  return (
    <svg viewBox="0 0 48 48" className="size-12">
      <defs>
        <linearGradient id="st" x2="0" y2="1"><stop stopColor="#d9e0e4" /><stop offset="1" stopColor="#7f7f81" /></linearGradient>
      </defs>
      <rect width="48" height="48" rx="10.500" fill="url(#st)" />
      <circle cx="24" cy="24" r="20.500" fill="#2b2c2e" />
      <circle cx="24" cy="24" r="18" fill="none" stroke="#77787a" strokeWidth="2.500" strokeDasharray="1.200 1.200" />
      <circle cx="24" cy="24" r="14.800" fill="none" stroke="#929395" strokeWidth="3.200" />
      <circle cx="24" cy="24" r="8" fill="#4a4b4d" stroke="#77787a" strokeWidth="1.500" />
      <path d="M24 24 17 11M24 24H38.500M24 24 17 37" stroke="#929395" strokeWidth="2.800" />
      <circle cx="24" cy="24" r="4" fill="#57585a" stroke="#929395" strokeWidth="1.500" />
    </svg>
  );
}

function ChromeIcon({ className }: { className: string }) {
  return (
    <svg viewBox="0 0 48 48" className={className}>
      <rect width="48" height="48" rx="10.500" fill="#f1eff1" />
      <circle cx="24" cy="24" r="20.800" fill="#fbbc05" />
      <path d="M6 13.600A20.800 20.800 0 0 1 42 13.600H24L15 29.200z" fill="#ea2a20" />
      <path d="M6 13.600A20.800 20.800 0 0 0 24 44.800L33 29.200H15z" fill="#1f9d4c" />
      <path d="M42 13.600H24L33 29.200 24 44.800A20.800 20.800 0 0 0 42 13.600z" fill="#fdc00d" />
      <circle cx="24" cy="24" r="10.300" fill="#fff" />
      <circle cx="24" cy="24" r="8.200" fill="#2369e8" />
    </svg>
  );
}

function IntelliJ() {
  return (
    <svg viewBox="0 0 48 48" className="size-12">
      <defs>
        <linearGradient id="ij" x2="1" y2="1"><stop stopColor="#ff9b1a" /><stop offset=".16" stopColor="#fb2a6c" /><stop offset=".38" stopColor="#8a4bf0" /><stop offset=".6" stopColor="#128ff8" /><stop offset=".85" stopColor="#2f78f6" /><stop offset="1" stopColor="#a357f2" /></linearGradient>
      </defs>
      <rect x="1" y="1.500" width="46" height="45.500" fill="url(#ij)" />
      <rect x="7.500" y="8" width="33" height="33" fill="#0b0412" />
      <rect x="11" y="34.500" width="13" height="2.300" fill="#fff" />
      <text x="10" y="24.500" fontFamily="Liberation Mono" fontWeight="bold" fontSize="17.500" letterSpacing="-1.200" fill="#fff">IJ</text>
    </svg>
  );
}

function Terminal() {
  return (
    <div className="size-12 rounded-[11px] border-2 border-[#8d9299] bg-black p-[3.500px]">
      <div className="h-full rounded-[6px] bg-[#262628] pl-[3px] pt-px font-['Liberation_Mono'] text-[12px] font-bold leading-[12px] text-white">&gt;_</div>
    </div>
  );
}

function SlackIcon() {
  return (
    <div className="flex size-12 items-center justify-center rounded-[11px] bg-white">
      <svg viewBox="0 0 122.800 122.800" className="size-[34px]">
        <path d="M25.800 77.600c0 7.100-5.800 12.900-12.900 12.900S0 84.700 0 77.600s5.800-12.900 12.900-12.900h12.900v12.900zm6.500 0c0-7.100 5.800-12.900 12.900-12.900s12.900 5.800 12.900 12.900v32.300c0 7.100-5.800 12.900-12.900 12.900s-12.900-5.800-12.900-12.900V77.600z" fill="#f5114e" />
        <path d="M45.200 25.800c-7.100 0-12.900-5.800-12.900-12.900S38.100 0 45.200 0s12.900 5.800 12.900 12.900v12.900H45.200zm0 6.500c7.100 0 12.900 5.800 12.900 12.900s-5.800 12.900-12.900 12.900H12.900C5.800 58.100 0 52.300 0 45.200s5.800-12.900 12.900-12.900h32.300z" fill="#18c6fa" />
        <path d="M97 45.200c0-7.100 5.800-12.900 12.900-12.900s12.900 5.800 12.900 12.900-5.800 12.900-12.900 12.900H97V45.200zm-6.500 0c0 7.100-5.800 12.900-12.900 12.900s-12.900-5.800-12.900-12.900V12.900C64.700 5.800 70.500 0 77.600 0s12.900 5.800 12.900 12.900v32.300z" fill="#16b675" />
        <path d="M77.600 97c7.100 0 12.900 5.800 12.900 12.900s-5.800 12.900-12.900 12.900-12.900-5.800-12.900-12.900V97h12.900zm0-6.500c-7.100 0-12.900-5.800-12.900-12.900s5.800-12.900 12.900-12.900h32.300c7.100 0 12.900 5.800 12.900 12.900s-5.800 12.900-12.900 12.900H77.600z" fill="#f3b010" />
      </svg>
    </div>
  );
}

function Edge({ id }: { id: string }) {
  return (
    <svg viewBox="0 0 48 48" className="size-12">
      <defs>
        <linearGradient id={`${id}a`} x2="1" y2=".5"><stop stopColor="#13a5ea" /><stop offset=".5" stopColor="#14c5d4" /><stop offset="1" stopColor="#3fe66c" /></linearGradient>
        <linearGradient id={`${id}b`} x2=".4" y2="1"><stop stopColor="#1695e6" /><stop offset="1" stopColor="#0a5fc0" /></linearGradient>
      </defs>
      <rect width="48" height="48" rx="10.500" fill="#fff" />
      <path d="M6.700 23C7 13 15 6.300 24 6.300c10 0 17.300 7 17.300 15.200 0 5.500-4 9-9.300 9-4 0-5.500-1.700-5-3 .5-1 1.300-1.700 1.300-3.500C28.300 19 23 16 17.500 16 12 16 8 19 6.700 23z" fill={`url(#${id}a)`} />
      <path d="M6.700 23C8 18.500 12.500 16 17.500 16c6 0 10.800 3.500 10.800 8-1-3-6-4-8.800-.5-4 5 .5 17.300 12.500 16-2.500 1.500-5 2.200-8 2.200C14 41.700 6.300 33 6.700 23z" fill={`url(#${id}b)`} />
      <path d="M19.500 22.500c-6.500 5-3 18.500 9 18.700 5-.7 8.700-3.700 11-7.400.6-1-.2-1.500-1-1-7 3.400-18 .5-19-10.300z" fill="#0f4d9d" />
    </svg>
  );
}

function QuickTime({ className }: { className: string }) {
  return (
    <svg viewBox="0 0 48 48" className={className}>
      <defs>
        <linearGradient id="qb" x2="0" y2="1"><stop stopColor="#4b4d52" /><stop offset="1" stopColor="#030303" /></linearGradient>
        <linearGradient id="qr" x2="0" y2="1"><stop stopColor="#e1e9f7" /><stop offset="1" stopColor="#8e98a3" /></linearGradient>
        <linearGradient id="qc" x2="0" y2="1"><stop stopColor="#1647d8" /><stop offset="1" stopColor="#24c5fb" /></linearGradient>
      </defs>
      <rect width="48" height="48" rx="10.500" fill="url(#qb)" />
      <circle cx="24" cy="24" r="15.700" fill="url(#qc)" stroke="url(#qr)" strokeWidth="6.500" />
      <path d="M20.500 24.500 26 20 43 37.500V43H38z" fill="#a7b3bf" />
    </svg>
  );
}

function Duke() {
  return (
    <svg viewBox="0 0 56 58" className="h-[58px] w-[56px]">
      <rect x="1" y="1" width="54" height="56" fill="#e6e6e6" stroke="#f8f8f8" />
      <path d="M1 57h54V1" fill="none" stroke="#555" strokeWidth="1" />
      <path d="M18 31C14 31 13 35 10 38M41 34c4-1 5-5 6-9" stroke="#111" strokeWidth="1.300" fill="none" />
      <path d="M19 32C15.500 39 14 45 15 49q3.500 1 6.500-5 3 3 7 3t7-3q3 5 6 5c.5-7-1-12-4.500-17z" fill="#fff" stroke="#111" strokeWidth="1.500" />
      <path d="M30 10 17.500 35 23 32h12l4.500 2.500z" fill="#000" />
      <circle cx="28" cy="29.500" r="6" fill="#ec2020" />
      <circle cx="26.500" cy="27.500" r="2.200" fill="#fb7777" />
      <path d="M46 26c-1-2 0-3 1-4V18l2 .5.5 4 4 1-.5 4-4 1.500zM3 37l4 1-1-3 3 2 2-2v4l4 1-4 1 0 4-3-3-3 1 1-3-3-2z" fill="#0b0b0b" />
    </svg>
  );
}

function Folder() {
  return (
    <svg viewBox="0 0 50 54" className="h-[54px] w-[50px] -translate-y-px">
      <defs>
        <linearGradient id="fo" x2="0" y2="1"><stop stopColor="#36ccfb" /><stop offset="1" stopColor="#1cafea" /></linearGradient>
      </defs>
      <path d="M9 1h20v18H9z" fill="#cfcfcf" />
      <path d="M11 1h18v3H11zM22 4h5v12h-5z" fill="#35363a" />
      <path d="M28 1 39 13v5H28z" fill="#f5f5f5" />
      <path d="M0 14q0-3 3-3h11l4 4h28q3 0 3 3v8H0z" fill="#1793d2" />
      <rect y="17" width="49" height="36" rx="2.500" fill="url(#fo)" />
    </svg>
  );
}

function Thumb({ children, badge }: { children: ReactNode; badge: ReactNode }) {
  return (
    <div className="relative flex h-12 w-[55px] items-center">
      {children}
      <div className="absolute bottom-[-2px] right-[2px] size-[18px]">{badge}</div>
    </div>
  );
}

function Trash() {
  return (
    <svg viewBox="0 0 44 56" className="h-[56px] w-[44px] -translate-y-px">
      <defs>
        <linearGradient id="tr"><stop stopColor="#63676a" /><stop offset=".35" stopColor="#96999b" /><stop offset=".7" stopColor="#606466" /><stop offset="1" stopColor="#7c8082" /></linearGradient>
      </defs>
      <path d="M1 8 7 51q1 4 15 4t15-4L43 8z" fill="url(#tr)" />
      <ellipse cx="22" cy="8" rx="21" ry="5" fill="#3b3d40" stroke="#a9adb0" />
      <path d="M4 8 8 3l5 2 4-4 5 3 5-3 5 3 5 1 3 4-8 4-7-2-5 3-6-3-6 1z" fill="#e9e9ea" />
      <path d="m14 4 3 5-4 1zM26 4l4 4-5 1z" fill="#54575b" />
      <path d="m18 7 3-2 1 3z" fill="#29b0c8" />
      <path d="m27 10 3-3 2 3z" fill="#c2553a" />
    </svg>
  );
}

function DockItem({ children, dot }: { children: ReactNode; dot?: boolean }) {
  return (
    <div className="relative flex h-[72px] w-[63.500px] shrink-0 items-center justify-center pb-[5px]">
      {children}
      {dot && <i className="absolute bottom-[1px] left-1/2 size-1 -translate-x-1/2 rounded-full bg-[#c08fe0]" />}
    </div>
  );
}

function Dock() {
  return (
    <footer className="absolute left-[54px] top-[821px] flex h-[74px] w-[1332px] rounded-[22px] border border-[#ffffff30] bg-gradient-to-r from-[#22102f] via-[#2e1150] via-[48%] to-[#2c1047] pl-[1.200px]">
      <div className="absolute inset-0 rounded-[22px] bg-gradient-to-r from-transparent from-[54%] via-[#6b1080] via-[68%] to-transparent to-[90%]" />
      <DockItem dot><Finder className="size-12" /></DockItem>
      <DockItem><Launchpad /></DockItem>
      <DockItem><Safari /></DockItem>
      <DockItem dot><Notes /></DockItem>
      <DockItem><AppStore /></DockItem>
      <DockItem>
        <Settings />
        <span className="absolute right-[0.500px] top-[5px] flex size-[22px] items-center justify-center rounded-full bg-[#f01017] font-['Inter'] text-[13px] text-white">1</span>
      </DockItem>
      <DockItem dot>
        <div className="flex size-12 items-center justify-center rounded-[11px] bg-gradient-to-b from-[#1ef26c] to-[#05cf29] text-white">
          <FaWhatsapp className="size-[40px]" />
        </div>
      </DockItem>
      <DockItem dot><ChromeIcon className="size-12" /></DockItem>
      <DockItem dot><IntelliJ /></DockItem>
      <DockItem dot><Terminal /></DockItem>
      <DockItem dot><SlackIcon /></DockItem>
      <div className="relative flex w-[27.500px] shrink-0 items-center justify-center">
        <i className="h-[54px] w-px bg-[#7d6799]" />
      </div>
      <DockItem dot><Edge id="e1" /></DockItem>
      <DockItem dot><Edge id="e2" /></DockItem>
      <DockItem dot><QuickTime className="size-12" /></DockItem>
      <DockItem dot><Duke /></DockItem>
      <div className="relative flex w-[29.300px] shrink-0 items-center justify-center">
        <i className="h-[54px] w-px bg-[#a065b8]" />
      </div>
      <DockItem><Folder /></DockItem>
      <DockItem>
        <Thumb badge={<ChromeIcon className="size-full" />}>
          <div className="h-[31px] w-[55px] bg-[#211a29]" />
        </Thumb>
      </DockItem>
      <DockItem>
        <Thumb badge={<Finder className="size-full" />}>
          <div className="flex h-[27px] w-[55px] gap-[3px] bg-[#1f1829]">
            <i className="w-[8px] bg-[#453e4c]" />
            <i className="ml-px mt-[5px] h-[4px] w-[3px] bg-white" />
            <i className="ml-[2px] mt-[5px] h-[4px] w-[4px] bg-[#2bbcf2]" />
            <i className="ml-[8px] mt-[5px] h-[4px] w-[4px] bg-[#2bbcf2]" />
          </div>
        </Thumb>
      </DockItem>
      <DockItem>
        <Thumb badge={<QuickTime className="size-full" />}>
          <svg viewBox="0 0 55 31" className="h-[31px] w-[55px]">
            <path d="M0 0h55v31H0z" fill="#2d2e31" />
            <path d="M0 0h19v31H0z" fill="#3d4144" />
            <path d="M50 1h3v29h-3z" fill="#e4e4e4" />
            <path d="M4 4h6M4 7h9M4 10h5M4 13h8" stroke="#4d5659" />
            <path d="M23 6h5M24 10h13M24 13h8M24 17h15M24 20h11M23 24h6" stroke="#554b39" />
          </svg>
        </Thumb>
      </DockItem>
      <DockItem><Trash /></DockItem>
    </footer>
  );
}

export default function App() {
  return (
    <div className="relative flex h-[900px] w-[1440px] flex-col overflow-hidden bg-[#12001f]">
      <svg viewBox="0 0 1440 900" className="absolute inset-0 h-full w-full" aria-hidden="true">
        <defs>
          <linearGradient id="dl" x2="0" y2="1"><stop stopColor="#54007c" /><stop offset="1" stopColor="#320066" /></linearGradient>
          <linearGradient id="db"><stop stopColor="#180028" /><stop offset=".5" stopColor="#3a0046" /><stop offset=".8" stopColor="#4a0052" /><stop offset="1" stopColor="#220040" /></linearGradient>
        </defs>
        <path d="M0 24h60v70H0z" fill="url(#dl)" />
        <path d="M20 24h25v25z" fill="#640082" />
        <path d="M0 780h1440v120H0z" fill="#12001f" />
        <path d="M790 790h440l60 110H940z" fill="url(#db)" />
        <path d="M1260 790h180v110H1150z" fill="#190035" />
        <path d="M1400 0h40v60h-40z" fill="#22003c" />
      </svg>
      <div className="relative">
        <MenuBar />
      </div>
      <EditorWindow />
      <Browser />
      <Dock />
    </div>
  );
}
